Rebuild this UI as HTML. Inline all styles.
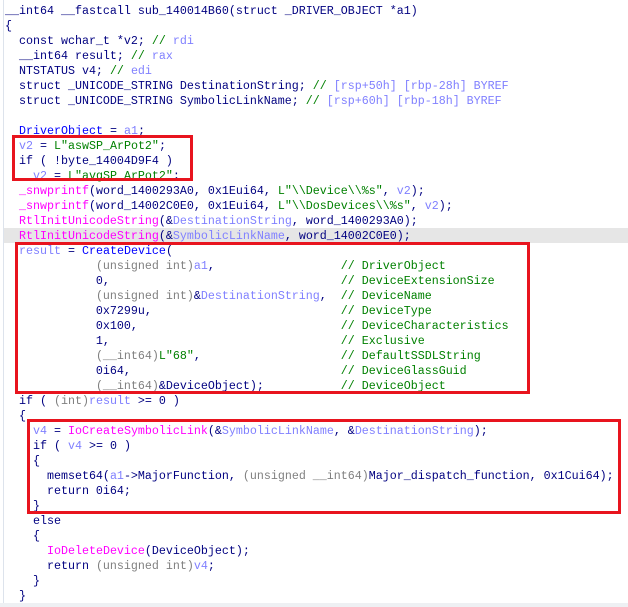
<!DOCTYPE html>
<html><head><meta charset="utf-8"><style>
html,body{margin:0;padding:0;background:#fff;width:628px;height:607px;overflow:hidden;position:relative}
#code{position:absolute;left:5px;top:4px;margin:0;font-family:"Liberation Mono",monospace;font-size:11.67px;line-height:15px;color:#000080;white-space:pre}
.v{color:#8080ff}.f{color:#ff00ff}.s{color:#008000}.c{color:#008000}.b{color:#0000ff}.g{color:#808080}
.hl{position:absolute;left:4px;top:228px;width:624px;height:15px;background:#e6e6e6}
.box{position:absolute;border:3px solid #e8141e;box-sizing:border-box}
.lb{position:absolute;left:3px;top:0;width:1px;height:607px;background:#dde3ec}
.bb{position:absolute;left:0;top:603px;width:628px;height:4px;background:#eef0f3}
</style></head><body>
<div class="lb"></div><div class="hl"></div><div class="bb"></div>
<pre id="code">__int64 __fastcall sub_140014B60(struct _DRIVER_OBJECT *a1)
{
  const wchar_t *v2; <span class="c">// </span><span class="v">rdi</span>
  __int64 result; <span class="c">// </span><span class="v">rax</span>
  NTSTATUS v4; <span class="c">// </span><span class="v">edi</span>
  struct _UNICODE_STRING DestinationString; <span class="c">// </span><span class="v">[rsp+50h] [rbp-28h] BYREF</span>
  struct _UNICODE_STRING SymbolicLinkName; <span class="c">// </span><span class="v">[rsp+60h] [rbp-18h] BYREF</span>

  <span class="b">DriverObject</span> = <span class="v">a1</span>;
  <span class="v">v2</span> = <span class="s">L"aswSP_ArPot2"</span>;
  if ( !byte_14004D9F4 )
    <span class="v">v2</span> = <span class="s">L"avgSP_ArPot2"</span>;
  <span class="f">_snwprintf</span>(word_1400293A0, 0x1Eui64, <span class="s">L"\\Device\\%s"</span>, <span class="v">v2</span>);
  <span class="f">_snwprintf</span>(word_14002C0E0, 0x1Eui64, <span class="s">L"\\DosDevices\\%s"</span>, <span class="v">v2</span>);
  <span class="f">RtlInitUnicodeString</span>(&amp;<span class="v">DestinationString</span>, word_1400293A0);
  <span class="f">RtlInitUnicodeString</span>(&amp;<span class="v">SymbolicLinkName</span>, word_14002C0E0);
  <span class="v">result</span> = <span class="b">CreateDevice</span>(
             <span class="g">(unsigned int)</span><span class="v">a1</span>,                  <span class="c">// DriverObject</span>
             0,                                 <span class="c">// DeviceExtensionSize</span>
             <span class="g">(unsigned int)</span>&amp;<span class="v">DestinationString</span>,  <span class="c">// DeviceName</span>
             0x7299u,                           <span class="c">// DeviceType</span>
             0x100,                             <span class="c">// DeviceCharacteristics</span>
             1,                                 <span class="c">// Exclusive</span>
             <span class="g">(__int64)</span><span class="s">L"68"</span>,                    <span class="c">// DefaultSSDLString</span>
             0i64,                              <span class="c">// DeviceGlassGuid</span>
             <span class="g">(__int64)</span>&amp;DeviceObject);           <span class="c">// DeviceObject</span>
  if ( <span class="g">(int)</span><span class="v">result</span> &gt;= 0 )
  {
    <span class="v">v4</span> = <span class="f">IoCreateSymbolicLink</span>(&amp;<span class="v">SymbolicLinkName</span>, &amp;<span class="v">DestinationString</span>);
    if ( <span class="v">v4</span> &gt;= 0 )
    {
      memset64(<span class="v">a1</span>-&gt;MajorFunction, <span class="g">(unsigned __int64)</span>Major_dispatch_function, 0x1Cui64);
      return 0i64;
    }
    else
    {
      <span class="f">IoDeleteDevice</span>(DeviceObject);
      return <span class="g">(unsigned int)</span><span class="v">v4</span>;
    }
  }
</pre>
<div class="box" style="left:12px;top:135px;width:181px;height:46px"></div>
<div class="box" style="left:15px;top:242px;width:515px;height:152px"></div>
<div class="box" style="left:27px;top:419px;width:594px;height:95px"></div>
</body></html>
